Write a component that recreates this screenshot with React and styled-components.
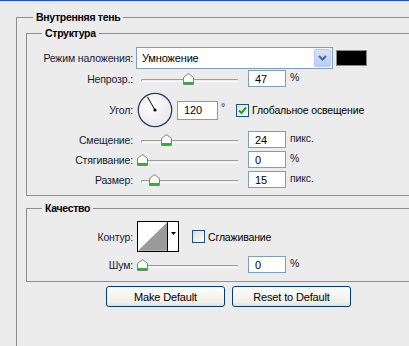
import React from "react";
import styled, { createGlobalStyle } from "styled-components";

const GlobalStyle = createGlobalStyle`
  html, body {
    margin: 0;
    padding: 0;
    background: #ececec;
    overflow: hidden;
  }
  body {
    font-family: "Liberation Sans", Arial, sans-serif;
    font-size: 10.5px;
    letter-spacing: -0.15px;
    color: #111;
  }
`;

const Window = styled.div`
  height: 346px;
  box-sizing: border-box;
  border-top: 1px solid #1d49d6;
  padding: 9px 0 0 16px;
  overflow: hidden;
`;

const Group = styled.fieldset`
  margin: ${({ $mt }) => $mt || 0}px 0 0 0;
  padding: ${({ $pad }) => $pad};
  border: 1px solid #8e8e8e;
  border-right: none;
  min-width: 0;
  min-height: ${({ $minH }) => ($minH ? `${$minH}px` : "auto")};
`;

const Legend = styled.legend`
  margin-left: ${({ $ml }) => $ml}px;
  padding: 0 3px;
  font-weight: bold;
  font-size: 10.5px;
  letter-spacing: -0.3px;
  line-height: 14px;
  color: #000;
`;

const Row = styled.div`
  display: grid;
  grid-template-columns: 106px auto;
  column-gap: 4px;
  align-items: center;
  height: ${({ $h }) => $h}px;
  margin-top: ${({ $mt }) => $mt || 0}px;
`;

const Label = styled.div`
  text-align: right;
  white-space: nowrap;
  color: #141a33;
`;

const Controls = styled.div`
  display: flex;
  align-items: center;
`;

const Select = styled.div`
  width: 197px;
  height: 22px;
  box-sizing: border-box;
  border: 1px solid #7f9db9;
  background: #fff;
  display: flex;
  align-items: center;
  justify-content: space-between;
  margin-left: -1px;
  padding: 1px;
`;

const SelectText = styled.span`
  padding-left: 4px;
  font-size: 11px;
  color: #000;
`;

const DropButton = styled.div`
  width: 17px;
  height: 18px;
  border-radius: 2px;
  background: linear-gradient(#d6e2fd, #b9cdf8);
  border: 1px solid #b7c9f5;
  box-sizing: border-box;
  display: flex;
  align-items: center;
  justify-content: center;
`;

const Swatch = styled.div`
  width: 31px;
  height: 16px;
  box-sizing: border-box;
  border: 1px solid #8a8a8a;
  background: #000;
  margin-left: 3px;
`;

const SliderBox = styled.div`
  position: relative;
  width: 101px;
  height: 17px;
  margin-right: 10px;
`;

const Track = styled.div`
  position: absolute;
  left: 4px;
  right: 0;
  top: 9px;
  height: 1px;
  border-top: 1px solid #9d9d9d;
  border-bottom: 1px solid #fff;
  border-left: 1px solid #9d9d9d;
  border-radius: 2px 0 0 2px;
`;

const Thumb = styled.svg`
  position: absolute;
  top: 3px;
`;

const NumInput = styled.div`
  width: ${({ $w }) => $w || 38}px;
  height: ${({ $h }) => $h || 17}px;
  box-sizing: border-box;
  border: 1px solid #7f9db9;
  background: #fff;
  padding-left: 6px;
  display: flex;
  align-items: center;
  font-size: 11px;
  color: #000;
  margin-left: ${({ $ml }) => $ml || 0}px;
`;

const Unit = styled.span`
  margin-left: ${({ $raised }) => ($raised ? "3px" : "4px")};
  margin-top: ${({ $raised }) => ($raised ? "-7px" : "-4px")};
  color: #141a33;
`;

const CheckWrap = styled.label`
  display: flex;
  align-items: center;
  margin-left: ${({ $ml }) => $ml}px;
  color: #000;
  white-space: nowrap;
`;

const CheckBox = styled.span`
  width: 13px;
  height: 13px;
  box-sizing: border-box;
  border: 1px solid #1c5180;
  background: linear-gradient(135deg, #dcdcd7, #fff);
  display: flex;
  align-items: center;
  justify-content: center;
  margin-right: 3px;
`;

const ContourBox = styled.div`
  width: 42px;
  height: 31px;
  box-sizing: border-box;
  border: 1px solid #000;
  display: flex;
  background: #fff;
`;

const ContourArrow = styled.div`
  width: 11px;
  border-left: 1px solid #000;
  display: flex;
  justify-content: center;
  padding-top: 10px;
  box-sizing: border-box;
`;

const ButtonBar = styled.div`
  display: flex;
  gap: 7px;
  margin: 4px 0 0 80px;
`;

const Button = styled.button`
  width: 119px;
  height: 21px;
  border: 1px solid #003c74;
  border-radius: 3px;
  background: linear-gradient(#fdfdfb, #f0efe8 80%, #e3e2da);
  font-family: "Liberation Sans", Arial, sans-serif;
  font-size: 11px;
  letter-spacing: -0.15px;
  color: #000;
  padding: 0;
`;

const SliderThumb = ({ left }) => (
  <Thumb width="11" height="12" viewBox="0 0 11 12" style={{ left }}>
    <path d="M0.5 4.5 L5.5 0.5 L10.5 4.5 V11.5 H0.5 Z" fill="#fdfdfd" stroke="#808080" />
    <rect x="1" y="9" width="9" height="2" fill="#2cb52c" />
  </Thumb>
);

const Slider = ({ pos }) => (
  <SliderBox>
    <Track />
    <SliderThumb left={pos} />
  </SliderBox>
);

const SliderRow = ({ label, pos, value, unit, mt }) => (
  <Row $h={17} $mt={mt}>
    <Label>{label}</Label>
    <Controls>
      <Slider pos={pos} />
      <NumInput>{value}</NumInput>
      <Unit>{unit}</Unit>
    </Controls>
  </Row>
);

const Check = ({ checked, ml, children }) => (
  <CheckWrap $ml={ml}>
    <CheckBox>
      {checked && (
        <svg width="9" height="9" viewBox="0 0 9 9">
          <path d="M1 4.5 L3.5 7 L8 1.5" fill="none" stroke="#21a121" strokeWidth="2" />
        </svg>
      )}
    </CheckBox>
    {children}
  </CheckWrap>
);

const Dial = () => (
  <svg width="36" height="36" viewBox="0 0 36 36">
    <defs>
      <radialGradient id="dialFill" cx="40%" cy="35%" r="70%">
        <stop offset="0%" stopColor="#ffffff" />
        <stop offset="100%" stopColor="#e6e6e6" />
      </radialGradient>
    </defs>
    <circle cx="18" cy="18" r="16.7" fill="url(#dialFill)" stroke="#2d3b66" strokeWidth="1.3" />
    <line x1="18" y1="18" x2="10.5" y2="5" stroke="#000" strokeWidth="1" />
    <circle cx="18" cy="18" r="1.6" fill="#000" />
  </svg>
);

export default function App() {
  return (
    <>
      <GlobalStyle />
      <Window>
        <Group $pad="0 0 0 9px" $minH={400}>
          <Legend $ml={7}>Внутренняя тень</Legend>

          <Group $mt={2} $pad="7px 0 7px 0">
            <Legend $ml={15}>Структура</Legend>
            <Row $h={22}>
              <Label>Режим наложения:</Label>
              <Controls>
                <Select>
                  <SelectText>Умножение</SelectText>
                  <DropButton>
                    <svg width="9" height="6" viewBox="0 0 9 6">
                      <path d="M1 1 L4.5 4.5 L8 1" fill="none" stroke="#4d6185" strokeWidth="2" />
                    </svg>
                  </DropButton>
                </Select>
                <Swatch />
              </Controls>
            </Row>
            <SliderRow label="Непрозр.:" pos={46} value="47" unit="%" mt={1} />
            <Row $h={35} $mt={5}>
              <Label>Угол:</Label>
              <Controls>
                <Dial />
                <NumInput $w={41} $h={19} $ml={4}>120</NumInput>
                <Unit $raised>°</Unit>
                <Check checked ml={11}>Глобальное освещение</Check>
              </Controls>
            </Row>
            <SliderRow label="Смещение:" pos={24} value="24" unit="пикс." mt={4} />
            <SliderRow label="Стягивание:" pos={0} value="0" unit="%" mt={3} />
            <SliderRow label="Размер:" pos={12} value="15" unit="пикс." mt={3} />
          </Group>

          <Group $mt={5} $pad="6px 0 8px 0">
            <Legend $ml={15}>Качество</Legend>
            <Row $h={31}>
              <Label>Контур:</Label>
              <Controls>
                <ContourBox>
                  <svg width="30" height="29" viewBox="0 0 30 29">
                    <path d="M0 29 L30 0 V29 Z" fill="#9a9a9a" />
                  </svg>
                  <ContourArrow>
                    <svg width="5" height="3" viewBox="0 0 5 3">
                      <path d="M0 0 H5 L2.5 3 Z" fill="#000" />
                    </svg>
                  </ContourArrow>
                </ContourBox>
                <Check ml={13}>Сглаживание</Check>
              </Controls>
            </Row>
            <SliderRow label="Шум:" pos={0} value="0" unit="%" mt={4} />
          </Group>

          <ButtonBar>
            <Button>Make Default</Button>
            <Button>Reset to Default</Button>
          </ButtonBar>
        </Group>
      </Window>
    </>
  );
}
